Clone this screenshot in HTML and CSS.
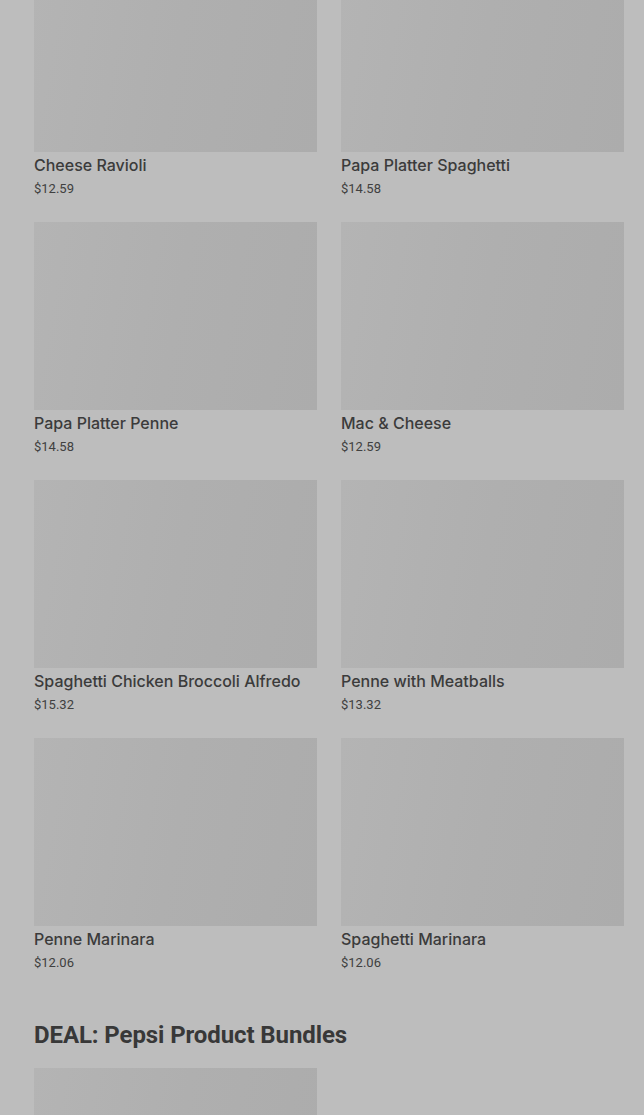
FILE: index.html
```html
<!DOCTYPE html>
<html>
<head>
<meta charset="utf-8">
<link rel="stylesheet" href="styles.css">
</head>
<body>
<main class="page">
  <section class="grid">
    <div class="card"><div class="img"></div><div class="title">Cheese Ravioli</div><div class="price">$12.59</div></div>
    <div class="card"><div class="img"></div><div class="title">Papa Platter Spaghetti</div><div class="price">$14.58</div></div>
    <div class="card"><div class="img"></div><div class="title">Papa Platter Penne</div><div class="price">$14.58</div></div>
    <div class="card"><div class="img"></div><div class="title">Mac &amp; Cheese</div><div class="price">$12.59</div></div>
    <div class="card"><div class="img"></div><div class="title">Spaghetti Chicken Broccoli Alfredo</div><div class="price">$15.32</div></div>
    <div class="card"><div class="img"></div><div class="title">Penne with Meatballs</div><div class="price">$13.32</div></div>
    <div class="card"><div class="img"></div><div class="title">Penne Marinara</div><div class="price">$12.06</div></div>
    <div class="card"><div class="img"></div><div class="title">Spaghetti Marinara</div><div class="price">$12.06</div></div>
  </section>
  <h2 class="heading">DEAL: Pepsi Product Bundles</h2>
  <section class="grid">
    <div class="card"><div class="img"></div></div>
  </section>
</main>
</body>
</html>
```
FILE: styles.css
```css
html, body {
  margin: 0;
  padding: 0;
  background: #bdbdbd;
  height: 1115px;
  overflow: hidden;
}
body {
  font-family: Roboto, "Liberation Sans", sans-serif;
  color: #3a3a3a;
}
.page {
  padding: 0 20px 0 34px;
  margin-top: -36px;
}
.grid {
  display: grid;
  grid-template-columns: 283px 283px;
  column-gap: 24px;
  row-gap: 24px;
}
.img {
  height: 188px;
  background: linear-gradient(100deg, #b4b4b4 0%, #afafaf 50%, #acacac 100%);
}
.title {
  margin-top: 3px;
  font-family: Inter, Roboto, sans-serif;
  font-size: 16px;
  line-height: 20px;
  font-weight: 500;
  color: #3b3b3b;
}
.price {
  margin-top: 5px;
  font-size: 13px;
  line-height: 18px;
  color: #404040;
}
.heading {
  margin: 47px 0 17px;
  font-size: 24px;
  line-height: 32px;
  font-weight: 700;
  letter-spacing: -0.1px;
  color: #383838;
}
```
